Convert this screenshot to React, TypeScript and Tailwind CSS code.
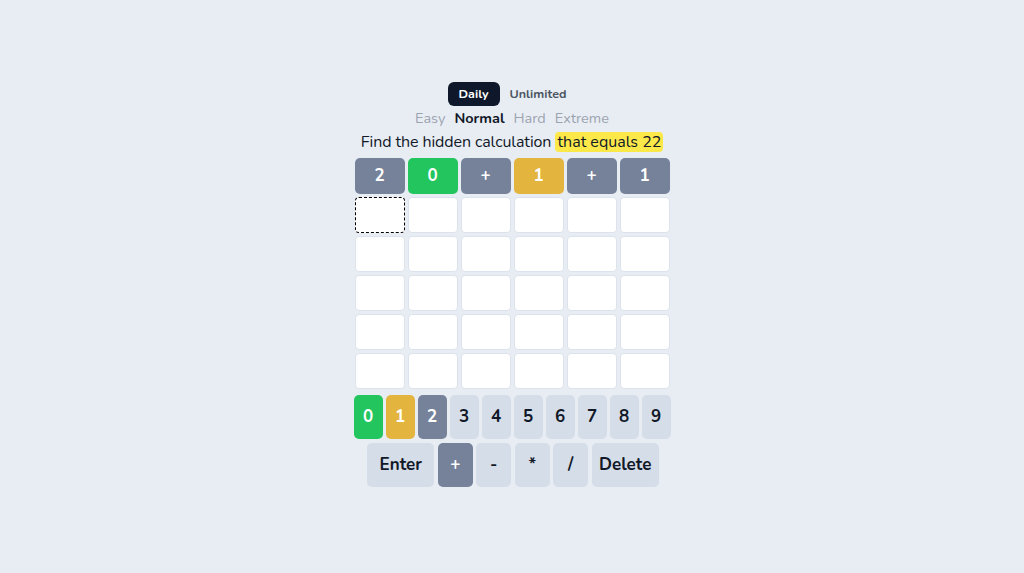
import React from "react";

const tileRow = [
  { v: "2", c: "bg-[#76829a]" },
  { v: "0", c: "bg-[#22c55e]" },
  { v: "+", c: "bg-[#76829a]" },
  { v: "1", c: "bg-[#e3b53f]" },
  { v: "+", c: "bg-[#76829a]" },
  { v: "1", c: "bg-[#76829a]" },
];

const digitKeys: { v: string; c: string }[] = [
  { v: "0", c: "bg-[#22c55e] text-white" },
  { v: "1", c: "bg-[#e3b53f] text-white" },
  { v: "2", c: "bg-[#76829a] text-white" },
  { v: "3", c: "bg-[#d5dde8] text-[#111827]" },
  { v: "4", c: "bg-[#d5dde8] text-[#111827]" },
  { v: "5", c: "bg-[#d5dde8] text-[#111827]" },
  { v: "6", c: "bg-[#d5dde8] text-[#111827]" },
  { v: "7", c: "bg-[#d5dde8] text-[#111827]" },
  { v: "8", c: "bg-[#d5dde8] text-[#111827]" },
  { v: "9", c: "bg-[#d5dde8] text-[#111827]" },
];

export default function App() {
  return (
    <div
      className="w-full h-[573px] bg-[#e8edf4] flex flex-col items-center pt-[82px]"
      style={{ fontFamily: "Nunito, 'Noto Sans', sans-serif" }}
    >
      <div className="flex items-center">
        <button className="h-[24px] px-[11px] rounded-md bg-[#0f172a] text-white text-[12.5px] font-bold leading-none">
          Daily
        </button>
        <button className="h-[24px] px-[10px] rounded-md text-[#4b5563] text-[12.5px] font-bold leading-none">
          Unlimited
        </button>
      </div>
      <div className="flex items-center gap-[9px] h-[24px] text-[14.5px] leading-none">
        <span className="text-[#9ca3af]">Easy</span>
        <span className="text-[#111827] font-bold">Normal</span>
        <span className="text-[#9ca3af]">Hard</span>
        <span className="text-[#9ca3af]">Extreme</span>
      </div>
      <div className="h-[24px] flex items-center text-[16px] text-[#111827] leading-none">
        <span className="tracking-[-0.1px]">Find the hidden calculation&nbsp;</span>
        <span className="bg-[#fde84a] rounded px-[2px] h-[20px] flex items-center">that equals 22</span>
      </div>
      <div className="mt-[4px] flex flex-col gap-[3px]">
        <div className="flex gap-[3px]">
          {tileRow.map((t, i) => (
            <div
              key={i}
              className={`w-[50px] h-[36px] rounded-[5px] flex items-center justify-center text-white font-bold text-[17px] ${t.c}`}
            >
              {t.v}
            </div>
          ))}
        </div>
        {[0, 1, 2, 3, 4].map((r) => (
          <div key={r} className="flex gap-[3px]">
            {[0, 1, 2, 3, 4, 5].map((c) =>
              r === 0 && c === 0 ? (
                <div
                  key={c}
                  className="w-[50px] h-[36px] rounded-[4px] bg-white border border-dashed border-black"
                />
              ) : (
                <div
                  key={c}
                  className="w-[50px] h-[36px] rounded-[4px] bg-white border border-[#dde3ec]"
                />
              )
            )}
          </div>
        ))}
      </div>
      <div className="mt-[6px] w-[317px] flex gap-[3px]">
        {digitKeys.map((k) => (
          <div
            key={k.v}
            className={`flex-1 h-[44px] rounded-[5px] flex items-center justify-center font-bold text-[17px] ${k.c}`}
          >
            {k.v}
          </div>
        ))}
      </div>
      <div className="mt-[4px] flex gap-[3.5px] pl-[2px]">
        <div className="w-[67px] h-[44px] rounded-[5px] bg-[#d5dde8] text-[#111827] flex items-center justify-center font-bold text-[17px]">
          Enter
        </div>
        <div className="w-[35px] h-[44px] rounded-[5px] bg-[#76829a] text-white flex items-center justify-center font-bold text-[17px]">
          +
        </div>
        <div className="w-[35px] h-[44px] rounded-[5px] bg-[#d5dde8] text-[#111827] flex items-center justify-center font-bold text-[17px]">
          -
        </div>
        <div className="w-[35px] h-[44px] rounded-[5px] bg-[#d5dde8] text-[#111827] flex items-center justify-center font-bold text-[17px]">
          *
        </div>
        <div className="w-[35px] h-[44px] rounded-[5px] bg-[#d5dde8] text-[#111827] flex items-center justify-center font-bold text-[17px]">
          /
        </div>
        <div className="w-[67px] h-[44px] rounded-[5px] bg-[#d5dde8] text-[#111827] flex items-center justify-center font-bold text-[17px]">
          Delete
        </div>
      </div>
    </div>
  );
}
